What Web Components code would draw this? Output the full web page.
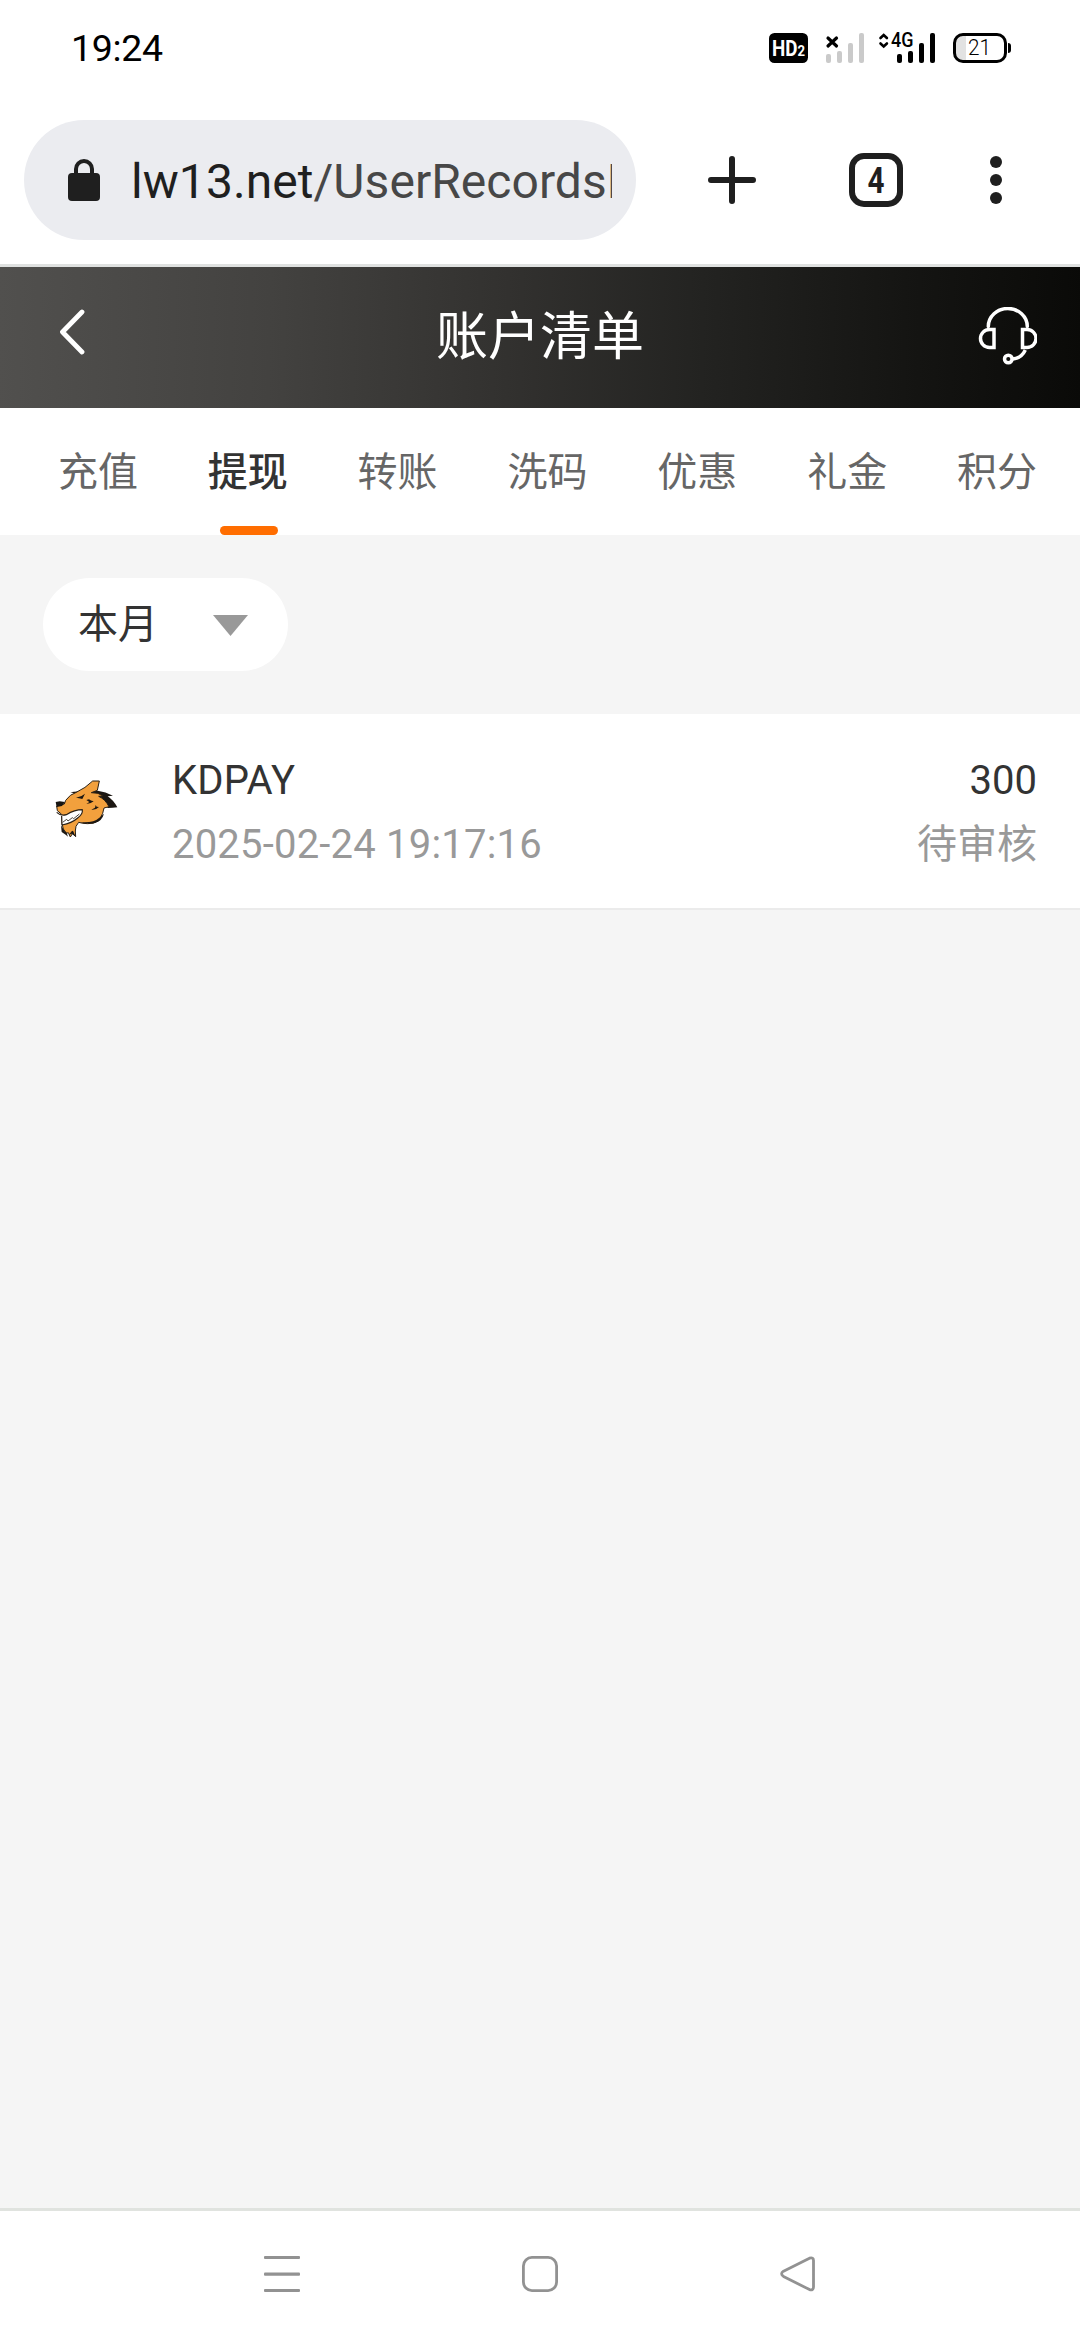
<!DOCTYPE html>
<html lang="zh-CN">
<head>
<meta charset="utf-8">
<meta name="viewport" content="width=device-width">
<title>账户清单</title>
<style>
body{margin:0;font-family:Roboto,"Noto Sans CJK SC",sans-serif;background:#f5f5f5}
</style>
</head>
<body>
<phone-screen>
  <status-bar slot="top" time="19:24"></status-bar>
  <browser-bar slot="top" count="4"><span slot="host">lw13.net</span><span slot="path">/UserRecordsList</span></browser-bar>
  <page-header slot="top">账户清单</page-header>
  <tab-strip slot="top">
    <tab-item>充值</tab-item>
    <tab-item active>提现</tab-item>
    <tab-item>转账</tab-item>
    <tab-item>洗码</tab-item>
    <tab-item>优惠</tab-item>
    <tab-item>礼金</tab-item>
    <tab-item>积分</tab-item>
  </tab-strip>
  <period-filter>本月</period-filter>
  <record-row>
    <tiger-logo slot="icon"></tiger-logo>
    <span slot="name">KDPAY</span>
    <span slot="time">2025-02-24 19:17:16</span>
    <span slot="amount">300</span>
    <span slot="status">待审核</span>
  </record-row>
  <nav-bar slot="bottom"></nav-bar>
</phone-screen>
<script>
const define = (name, html) => {
  const tpl = document.createElement('template');
  tpl.innerHTML = html;
  customElements.define(name, class extends HTMLElement {
    constructor() {
      super();
      this.attachShadow({ mode: 'open' }).append(tpl.content.cloneNode(true));
    }
    connectedCallback() {
      this.shadowRoot.querySelectorAll('[data-attr]').forEach(el => {
        el.textContent = this.getAttribute(el.dataset.attr);
      });
    }
  });
};

define('phone-screen', `
<style>
:host{display:flex;flex-direction:column;width:1080px;height:2340px;overflow:hidden;background:#f5f5f5}
main{flex:1;min-height:0}
</style>
<slot name="top"></slot><main><slot></slot></main><slot name="bottom"></slot>`);

define('status-bar', `
<style>
:host{display:flex;justify-content:space-between;align-items:center;height:96px;padding:0 68px 0 71px;box-sizing:border-box;background:#fff;color:#000}
.time{font-size:37.5px;line-height:40px;letter-spacing:-.3px}
.icons{display:block}
text{font-family:Roboto,sans-serif}
</style>
<span class="time" data-attr="time"></span>
<svg class="icons" width="243" height="60" viewBox="769 18 243 60">
  <rect x="769" y="33" width="39" height="30" rx="5.5"/>
  <text x="772" y="56" font-size="21.5" font-weight="700" fill="#fff" textLength="33" lengthAdjust="spacingAndGlyphs">HD<tspan font-size="15" dy="-.5">2</tspan></text>
  <g fill="#cacaca"><rect x="826" y="54" width="5" height="9" rx="2"/><rect x="837" y="51" width="5" height="12" rx="2"/><rect x="848" y="43" width="5" height="20" rx="2"/><rect x="859" y="33" width="5" height="30" rx="2"/></g>
  <path d="M828 38l8.500 8M836.500 38l-8.500 8" stroke="#000" stroke-width="3.200" stroke-linecap="round"/>
  <path d="M880.500 38l3.200-3 3.200 3M880.500 43.500l3.200 3 3.200-3" fill="none" stroke="#000" stroke-width="2.600" stroke-linecap="round"/>
  <text x="891" y="47" font-size="19.5" font-weight="500" textLength="22.500" lengthAdjust="spacingAndGlyphs">4G</text>
  <rect x="897" y="54" width="5" height="9" rx="2"/><rect x="908" y="51" width="5" height="12" rx="2"/><rect x="919" y="43" width="5" height="20" rx="2"/><rect x="930" y="33" width="5" height="30" rx="2"/>
  <rect x="954.500" y="34.500" width="51" height="27" rx="8.500" fill="#fff"/>
  <path d="M966 35v26h-4a8 8 0 0 1-8-8v-10a8 8 0 0 1 8-8z" fill="#e2e2e2"/>
  <rect x="954.500" y="34.500" width="51" height="27" rx="8.500" fill="none" stroke="#000" stroke-width="3"/>
  <path d="M1008 43q3 0 3 3v4q0 3-3 3z"/>
  <text x="968" y="55.300" font-size="21.500" font-weight="300" textLength="23" lengthAdjust="spacingAndGlyphs">21</text>
</svg>`);

define('browser-bar', `
<style>
:host{display:flex;align-items:center;height:171px;padding:0 78px 0 24px;box-sizing:border-box;background:#fff;border-bottom:3px solid #dfe1e0;color:#1f1f1f}
.pill{display:flex;align-items:center;width:612px;height:120px;border-radius:60px;background:#ebecf0;box-sizing:border-box;padding:0 24px 0 44px}
.url{flex:1;min-width:0;overflow:hidden;white-space:nowrap;font-size:48px;line-height:64px;margin-left:31px;padding-top:3px;letter-spacing:.06px}
.path{color:#474747}
svg{display:block}
.actions{display:flex;align-items:center;padding-left:72px}
.count{margin:0 87px 0 93px}
</style>
<div class="pill">
  <svg width="32" height="42" viewBox="0 0 32 42"><path d="M8 16v-6a8 8 0 0 1 16 0v6" fill="none" stroke="#1f1f1f" stroke-width="4"/><rect y="14" width="32" height="28" rx="4" fill="#1f1f1f"/></svg>
  <div class="url"><slot name="host"></slot><span class="path"><slot name="path"></slot></span></div>
</div>
<div class="actions">
  <svg width="48" height="48" viewBox="0 0 48 48"><path d="M24 3v42M3 24h42" stroke="#1f1f1f" stroke-width="6" stroke-linecap="round"/></svg>
  <svg class="count" width="54" height="54" viewBox="0 0 54 54"><rect x="3" y="3" width="48" height="48" rx="12" fill="none" stroke="#1f1f1f" stroke-width="6"/><text x="18.500" y="40" font-family="Roboto,sans-serif" font-weight="700" font-size="36" textLength="17" lengthAdjust="spacingAndGlyphs" fill="#1f1f1f" data-attr="count"></text></svg>
  <svg width="12" height="48" viewBox="0 0 12 48" fill="#1f1f1f"><circle cx="6" cy="6" r="6"/><circle cx="6" cy="24" r="6"/><circle cx="6" cy="42" r="6"/></svg>
</div>`);

define('page-header', `
<style>
:host{display:flex;align-items:center;justify-content:space-between;height:141px;box-sizing:border-box;padding:0 43px 0 59px;background:linear-gradient(91deg,#51504e,#434240 25%,#32312f 47%,#232321 65%,#141412 85%,#0a0a08);color:#fff}
.side{width:59px}
svg{display:block}
h1{margin:0;font-size:52px;line-height:76px;font-weight:400;padding-right:16px}
</style>
<div class="side"><svg width="27" height="46" viewBox="0 0 27 46" style="margin-bottom:11px"><path d="M23 3L3.500 23 23 43" fill="none" stroke="#fff" stroke-width="4.800" stroke-linecap="round" stroke-linejoin="round"/></svg></div>
<h1><slot></slot></h1>
<div class="side"><svg width="59" height="59" viewBox="0 0 59 59" fill="none" stroke="#fff" stroke-width="3.500" style="margin-bottom:3px"><path d="M10.300 19.500a19.500 18 0 0 1 39 0" stroke-linecap="round"/><path d="M16 22.500h-4.500a8.900 8.900 0 0 0 0 18h4.500zM44.500 22.500h4.500a8.900 8.900 0 0 1 0 18h-4.500z"/><circle cx="30.300" cy="52" r="3.800"/><path d="M34.500 52q9-.8 12.800-9"/></svg></div>`);

define('tab-strip', `
<style>
:host{display:flex;height:127px;padding-left:23px;background:#fff;overflow:hidden}
</style><slot></slot>`);

define('tab-item', `
<style>
:host{display:flex;flex-direction:column;align-items:center;justify-content:space-between;flex:0 0 149.850px;font-size:40px;line-height:60px;padding-top:35px;box-sizing:border-box;color:#666;white-space:nowrap}
:host([active]){color:#333;font-weight:500}
i{display:block;width:58px;height:9px;border-radius:5px;margin-left:2px}
:host([active]) i{background:#ff6d00}
</style><span><slot></slot></span><i></i>`);

define('period-filter', `
<style>
:host{display:flex;height:179px;align-items:center;padding-left:43px}
div{display:flex;align-items:center;justify-content:space-between;width:245px;height:93px;border-radius:47px;box-sizing:border-box;padding:0 40px 0 35px;background:#fff;color:#333;font-size:40px;line-height:60px}
svg{display:block;margin-top:1px}
</style><div><span><slot></slot></span><svg width="35" height="21" viewBox="0 0 35 21"><path d="M0 0h35L17.500 21z" fill="#999"/></svg></div>`);

define('tiger-logo', `
<style>:host{display:block;margin-bottom:4px}svg{display:block}</style>
<svg width="64" height="60" viewBox="45 57 192 180" stroke-linejoin="round">
  <path fill="#1c1712" d="M91 97q20-5 40-1l30-3 12-1q24 3 46 15l-16 2q18 12 29 33-14 2-28 2l-12-8-60-32q-20 0-41-7z"/>
  <path fill="#f2a03d" stroke="#2a2015" stroke-width="3" d="M178 63l-6 28-18 7q22-1 35 10l-13 1q20 9 31 31l-15 4-4 16q-6 15-13 22-12 10-32 9-15 0-27-4l-8 12-2 14 1 17-9-10-7 11-6-13-6 2-9-13-4-16-1-28-13-11-2-14 23-6 4-11q14-19 30-23 30-14 51-35z"/>
  <path fill="#fff" stroke="#2a2015" stroke-width="3.500" d="M50 157q13 12 29 7 25-15 48-15 2 14-14 25-18 16-47 21l-1-27"/>
  <path d="M68 187l12-9 4 5 13-10 4 3 17-14" fill="none" stroke="#2a2015" stroke-width="2.500"/>
  <path d="M108 113q16-2 27-12l-8 16-10-2zM139 120l8-2q5 5 14 6-9 8-22 8l9-6zM167 135l3 5 7 1q-10 10-23 8l11-6zM63 196l11 18 5 2 5 14-7-6-12-8zM99 212l8 18-12-9-9 4 9-11zM192 161q-6 21-25 27-22 6-49-2 42 4 60-13z" fill="#1c1712"/>
  <path d="M47 126l12-2 16 2-9 12-16 3z" fill="#171411"/>
</svg>`);

define('record-row', `
<style>
:host{display:flex;align-items:center;height:196px;box-sizing:border-box;padding:0 43px 0 55px;background:#fff;border-bottom:2px solid #ebebeb;font-size:40px;line-height:64px;color:#333}
.info{flex:1;padding-left:53px;letter-spacing:.2px}
.sum{text-align:right}
.info,.sum{display:flex;flex-direction:column;padding-top:3px}
.dim{color:#999}
</style>
<slot name="icon"></slot>
<div class="info"><div><slot name="name"></slot></div><div class="dim"><slot name="time"></slot></div></div>
<div class="sum"><div><slot name="amount"></slot></div><div class="dim"><slot name="status"></slot></div></div>`);

define('nav-bar', `
<style>
:host{display:flex;justify-content:space-between;align-items:flex-start;height:132px;box-sizing:border-box;padding:45px 264px 0;background:#fff;border-top:3px solid #e0e3df}
svg{display:block}
</style>
<svg width="36" height="36" viewBox="0 0 36 36" fill="#929292"><rect width="36" height="3" rx="1"/><rect y="16.500" width="36" height="3.300" rx="1"/><rect y="33" width="36" height="3" rx="1"/></svg>
<svg width="36" height="36" viewBox="0 0 36 36"><rect x="1.400" y="1.400" width="33.200" height="33.200" rx="8.500" fill="none" stroke="#929292" stroke-width="2.800"/></svg>
<svg width="36" height="36" viewBox="0 0 36 36"><path d="M29.500 2.200L3.500 15.200q-3.800 2.500 0 5.200l26 13.200q4 1 4-2.500V4.500q0-3.500-4-2.300z" fill="none" stroke="#929292" stroke-width="2.800" stroke-linejoin="round"/></svg>`);
</script>
</body>
</html>
